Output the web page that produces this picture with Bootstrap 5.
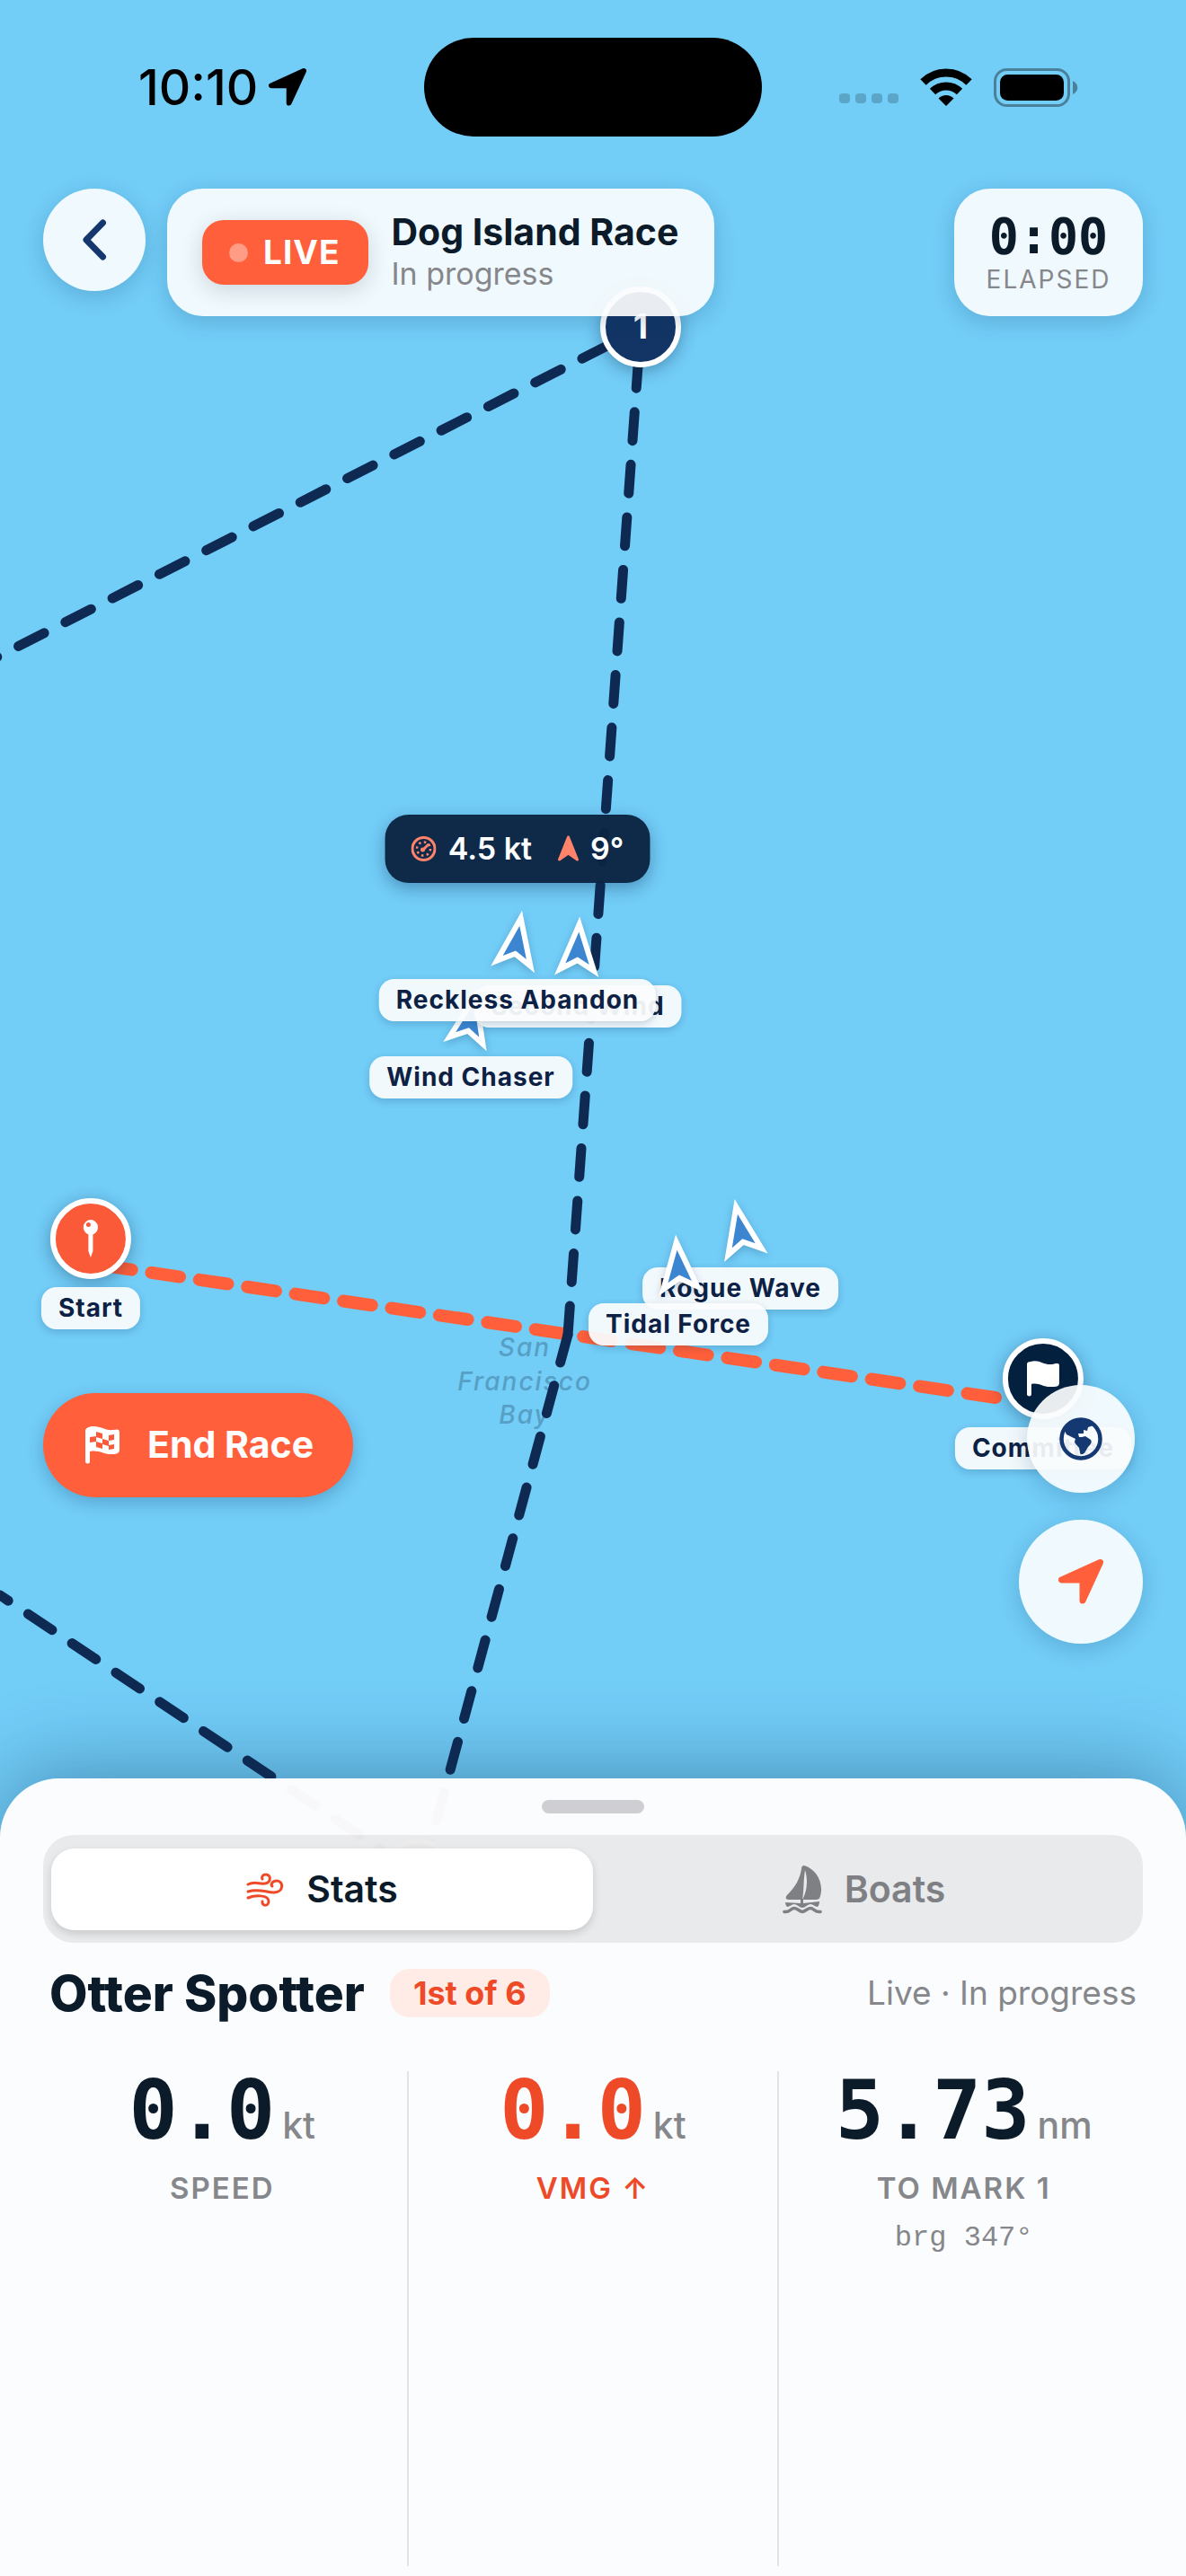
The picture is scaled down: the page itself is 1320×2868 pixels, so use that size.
<!DOCTYPE html>
<html lang="en">
<head>
<meta charset="utf-8">
<meta name="viewport" content="width=device-width, initial-scale=1">
<title>Dog Island Race</title>
<link href="https://cdn.jsdelivr.net/npm/bootstrap@5.3.0/dist/css/bootstrap.min.css" rel="stylesheet">
<style>
:root{--sea:#72cdf7;--ink:#0b1b2a;--navy:#0f2a52;--coral:#ff5f3a;--ember:#ee4a28;--mute:#86878b}
body{font-family:Inter,"Liberation Sans",sans-serif;background:var(--sea);color:var(--ink);line-height:1.2}
button{font-family:inherit}
.screen{min-height:100vh;position:relative;overflow:hidden;isolation:isolate}
.glass{background:rgba(250,252,253,.93);box-shadow:0 6px 24px rgba(10,50,90,.2)}

/* status bar */
.statusbar{height:210px;padding:42px 120px 0 154px}
.side{width:318px;height:110px}
.side-end{height:110px}
.clock{font-size:55px;font-weight:500;color:#000}
.island{width:376px;height:110px;background:#000;border-radius:55px}
.celldot{width:12px;height:11px;border-radius:4px;background:#5ba5c8}

/* header */
.edge{padding-left:48px;padding-right:48px}
.back{width:114px;height:114px;border:0}
.racecard{height:142px;border-radius:40px;padding:0 40px 0 39px;gap:25px}
.livetag{height:72px;padding:0 32px 0 30px;gap:17px;border-radius:24px;background:var(--coral);color:#fff;font-size:37px;font-weight:700;letter-spacing:1px;box-shadow:0 6px 24px rgba(10,30,50,.16)}
.livedot{width:21px;height:21px;background:#ff9c85}
.racename{font-size:41px;font-weight:700;line-height:48px}
.racestate{font-size:34px;line-height:46px;color:var(--mute)}
.timer{width:210px;height:142px;border-radius:40px}
.mono{font-family:"DejaVu Sans Mono",monospace}
.timer .mono{font-size:55px;font-weight:700;line-height:60px}
.timer small{font-size:28px;line-height:36px;letter-spacing:2px;color:var(--mute)}

/* map */
.chart{position:absolute;inset:0;z-index:-1}
.chart>svg{position:absolute;top:0;left:calc(50% - 660px)}
.pin{position:absolute;display:flex;flex-direction:column;align-items:center;white-space:nowrap}
.boat{transform:translate(-50%,-43px)}
.buoy{transform:translate(-50%,-45px);gap:9px}
.boat svg{filter:drop-shadow(0 3px 4px rgba(10,50,90,.25))}
.pinlabel{height:47px;padding:0 19px;border-radius:17px;background:rgba(250,252,253,.94);color:#0c2144;font-size:28px;font-weight:700;line-height:47px;letter-spacing:1px;box-shadow:0 3px 8px rgba(10,50,90,.2)}
.disc{width:90px;height:90px;border:6px solid #fff;border-radius:50%;box-shadow:0 4px 18px rgba(10,30,60,.35);color:#fff;font-size:38px;font-weight:700}
.disc-mark{background:#123566}
.disc-start{background:#fb5a38}
.disc-comm{background:#04203f}
.readout{transform:translateX(-50%);height:76px;width:295px;border-radius:26px;background:rgba(11,36,67,.97);color:#fff;font-size:34px;font-weight:600;box-shadow:0 6px 18px rgba(10,40,80,.35);flex-direction:row;justify-content:center;gap:28px}
.reading{display:flex;align-items:center;gap:13px}
.p-mark{left:calc(50% + 53px);top:364px}
.p-start{left:calc(50% - 559px);top:1379px}
.p-comm{left:calc(50% + 501px);top:1535px}
.p-wind{left:calc(50% - 136px);top:1133px}
.p-second{left:calc(50% - 17px);top:1054px}
.p-reck{left:calc(50% - 84px);top:1047px}
.p-rogue{left:calc(50% + 164px);top:1368px}
.p-tidal{left:calc(50% + 95px);top:1408px}
.p-read{left:calc(50% - 84px);top:907px}

/* floating controls */
.controls{margin-bottom:150px}
.endrace{height:116px;margin-top:9px;padding:0 44px 0 46px;gap:30px;border:0;border-radius:58px;background:var(--coral);color:#fff;font-size:41px;font-weight:700;box-shadow:0 6px 18px rgba(10,50,90,.25)}
.fabs{gap:30px}
.fab-s{width:120px;height:120px;border:0}
.fab-l{width:138px;height:138px;border:0}

/* bottom sheet */
.sheet{background:rgba(253,253,254,.98);border-radius:66px 66px 0 0;padding:24px 0 11px;box-shadow:0 -10px 90px rgba(10,50,90,.38)}
.grabber{width:114px;height:15px;border-radius:8px;background:#cfcfd3}
.seg{height:120px;margin-top:24px;padding:15px 9px 14px;border-radius:34px;background:rgba(0,0,0,.07)}
.seg button{border:0;background:none;border-radius:26px;font-size:41px;font-weight:600;color:#7f8084;gap:25px}
.seg button.on{background:#fff;color:var(--ink);box-shadow:0 4px 10px rgba(0,0,0,.14)}
.boatrow{height:56px;margin-top:28px;padding:0 55px}
.boatname{font-size:55px;font-weight:800;line-height:56px;margin:0}
.rank{height:54px;padding:0 26px;border-radius:22px;background:#ffece7;color:var(--ember);font-size:36px;font-weight:700;line-height:54px;margin-left:28px}
.livestate{font-size:37px;color:var(--mute)}
.stats{padding:0 42px;margin-top:59px;min-height:551px}
.stat+.stat{border-left:2px solid #e3e3e6}
.bigfig{font-size:90px;font-weight:700;line-height:88px}
.unit{font-size:41px;font-weight:500;color:var(--mute);margin-left:8px}
.statname{font-size:33px;font-weight:600;letter-spacing:2px;line-height:40px;margin-top:22px;color:var(--mute)}
.hot,.hot .statname{color:var(--ember)}
.bearing{font-family:"Liberation Mono",monospace;font-size:32px;line-height:40px;margin-top:16px;color:var(--mute)}
</style>
</head>
<body>
<main class="screen d-flex flex-column">

  <div class="chart">
    <svg width="1320" height="2868" viewBox="0 0 1320 2868" fill="none" stroke-linecap="round" aria-hidden="true">
      <g fill="#579fc5" font-family="Inter,'Liberation Sans',sans-serif" font-size="28" font-style="italic" font-weight="500" letter-spacing="2" text-anchor="middle">
        <text x="584" y="1510">San</text><text x="584" y="1548">Francisco</text><text x="584" y="1585">Bay</text>
      </g>
      <path d="M115 1409L1108 1556" stroke="#ff5f3a" stroke-width="14" stroke-dasharray="32 22"/>
      <g stroke="#0f2a52" stroke-width="11" stroke-dasharray="32 26.7">
        <path d="M632 1486L713 366"/>
        <path d="M632 1486L468 2093"/>
        <path d="M713 366L-10 735" stroke-dashoffset="17.7"/>
        <path d="M0 1776L465 2087" stroke-dashoffset="21"/>
      </g>
      <circle cx="465" cy="2092" r="42" fill="#123a6e" stroke="#fff" stroke-width="6"/>
    </svg>

    <div class="pin buoy p-mark"><span class="disc disc-mark d-flex align-items-center justify-content-center">1</span></div>
    <div class="pin buoy p-start">
      <span class="disc disc-start d-flex align-items-center justify-content-center">
        <svg width="20" height="44" viewBox="0 0 20 44"><path d="M10 1a8.500 8.500 0 0 1 2.500 16.500V36L10 43 7.500 36V17.500A8.500 8.500 0 0 1 10 1z" fill="#fff"/><circle cx="7.500" cy="6.500" r="2.500" fill="#fb5a38"/></svg>
      </span>
      <span class="pinlabel">Start</span>
    </div>
    <div class="pin buoy p-comm">
      <span class="disc disc-comm d-flex align-items-center justify-content-center">
        <svg width="36" height="40" viewBox="0 0 36 40"><path d="M0 4C0 2 2 1 4 1c10-3 14 4 24 3 4-1 8-2 8 1v20c0 4-4 4-8 4-10 1-14-5-23-3v11a2.500 2.500 0 0 1-5 0z" fill="#fff"/></svg>
      </span>
      <span class="pinlabel">Committee</span>
    </div>

    <div class="pin boat p-wind"><svg width="86" height="86" viewBox="-43 -43 86 86"><path transform="rotate(12)" d="M0-25L19 26 0 15-19 26z" fill="#3c86d1" stroke="#fff" stroke-width="6"/></svg><span class="pinlabel">Wind Chaser</span></div>
    <div class="pin boat p-second"><svg width="86" height="86" viewBox="-43 -43 86 86"><path transform="rotate(3)" d="M0-25L19 26 0 15-19 26z" fill="#3c86d1" stroke="#fff" stroke-width="6"/></svg><span class="pinlabel">Second Wind</span></div>
    <div class="pin boat p-reck"><svg width="86" height="86" viewBox="-43 -43 86 86"><path transform="rotate(9)" d="M0-25L19 26 0 15-19 26z" fill="#3c86d1" stroke="#fff" stroke-width="6"/></svg><span class="pinlabel">Reckless Abandon</span></div>
    <div class="pin boat p-rogue"><svg width="86" height="86" viewBox="-43 -43 86 86"><path transform="rotate(-11)" d="M0-25L19 26 0 15-19 26z" fill="#3c86d1" stroke="#fff" stroke-width="6"/></svg><span class="pinlabel">Rogue Wave</span></div>
    <div class="pin boat p-tidal"><svg width="86" height="86" viewBox="-43 -43 86 86"><path transform="rotate(-5)" d="M0-25L19 26 0 15-19 26z" fill="#3c86d1" stroke="#fff" stroke-width="6"/></svg><span class="pinlabel">Tidal Force</span></div>

    <div class="pin readout p-read">
      <span class="reading"><svg width="28" height="28" viewBox="0 0 28 28" fill="none" stroke="#ff836b"><circle cx="14" cy="14" r="12.500" stroke-width="3"/><circle cx="14" cy="14" r="7.500" stroke-width="2.500" stroke-dasharray="2.500 3.400"/><path d="M13 15.500l6-6" stroke-width="3" stroke-linecap="round"/><circle cx="13" cy="15" r="1.500" stroke-width="2"/></svg>4.5 kt</span>
      <span class="reading"><svg width="24" height="30" viewBox="0 0 24 30"><path d="M12 2L22 27 12 20 2 27z" fill="#ff836b" stroke="#ff836b" stroke-width="3" stroke-linejoin="round"/></svg>9°</span>
    </div>
  </div>

  <div class="statusbar d-flex">
    <div class="side d-flex align-items-center gap-2">
      <span class="clock">10:10</span>
      <svg class="ms-1" width="42" height="42" viewBox="0 0 50 50"><path d="M46.500 3.500L3.500 23H27V46z" stroke="#000" stroke-width="7" stroke-linejoin="round"/></svg>
    </div>
    <div class="island"></div>
    <div class="side-end flex-fill d-flex align-items-center justify-content-end">
      <div class="d-flex mt-4" style="gap:6px"><i class="celldot"></i><i class="celldot"></i><i class="celldot"></i><i class="celldot"></i></div>
      <svg class="ms-4" width="58" height="42" viewBox="0 0 58 42" fill="none" stroke="#000" stroke-width="9"><path d="M3.500 15.500a36 36 0 0 1 51 0"/><path d="M14 26a21.500 21.500 0 0 1 30 0"/><path d="M29 42l-8.500-8.500a12 12 0 0 1 17 0z" fill="#000" stroke="none"/></svg>
      <svg class="ms-4" width="94" height="43" viewBox="0 0 94 43"><rect x="1.500" y="1.500" width="82" height="40" rx="13" fill="none" stroke="#4a8099" stroke-width="3"/><rect x="7" y="7" width="71" height="29" rx="8.500"/><path d="M88 14c7 3 7 12 0 15z" fill="#4a8099"/></svg>
    </div>
  </div>

  <header class="edge d-flex align-items-start">
    <button class="back glass rounded-circle d-flex align-items-center justify-content-center p-0" aria-label="Back">
      <svg width="28" height="46" viewBox="0 0 28 46" fill="none" stroke="#14386d" stroke-width="7" stroke-linecap="round" stroke-linejoin="round"><path d="M23.500 4L5 23l18.500 19"/></svg>
    </button>
    <div class="racecard glass d-flex align-items-center ms-4">
      <span class="livetag d-flex align-items-center"><i class="livedot rounded-circle"></i>LIVE</span>
      <div>
        <div class="racename">Dog Island Race</div>
        <div class="racestate">In progress</div>
      </div>
    </div>
    <div class="timer glass ms-auto d-flex flex-column align-items-center justify-content-center">
      <span class="mono">0:00</span>
      <small>ELAPSED</small>
    </div>
  </header>

  <div class="controls edge mt-auto d-flex justify-content-between align-items-start">
    <button class="endrace d-flex align-items-center">
      <svg width="40" height="42" viewBox="0 0 40 42"><path d="M1 4C2 2 5 0 10 0c9 0 13 5 22 4 5-1 7-1 7 3v19c0 4-3 5-8 5-9 1-14-5-25-3v11a2.500 2.500 0 0 1-5 0z" fill="#fff"/><path d="M13 6l7 2v6l-7-2zM27 10l6-1v6l-6 1zM6 12l7-1v6l-7 1zM20 14l7 2v6l-7-2zM13 17l7 2v6l-7-2zM27 21l6-1v5l-6 1z" fill="#fb5a38"/></svg>
      End Race
    </button>
    <div class="fabs d-flex flex-column align-items-center">
      <button class="fab-s glass rounded-circle d-flex align-items-center justify-content-center p-0" aria-label="Map style">
        <svg width="48" height="48" viewBox="0 0 48 48"><circle cx="24" cy="24" r="21.500" fill="none" stroke="#143872" stroke-width="4.500"/><path d="M5 13C10 3 27-1 38 9l-3 1-3 1-1 4-4-1v4l-6 0 1 4 3 0 4-1 6 4c2 3-1 6-3 8l-3 5c-1 3-6 5-6 1l-1-5c-2-3-5-5-5-7l1-3-2-1-8-4z" fill="#143872"/></svg>
      </button>
      <button class="fab-l glass rounded-circle d-flex align-items-center justify-content-center p-0" aria-label="Locate">
        <svg width="50" height="50" viewBox="0 0 50 50"><path d="M46.500 3.500L3.500 23H27V46z" fill="#ff5f3a" stroke="#ff5f3a" stroke-width="7" stroke-linejoin="round"/></svg>
      </button>
    </div>
  </div>

  <section class="sheet">
    <div class="grabber mx-auto"></div>
    <div class="edge">
      <div class="seg d-flex" role="tablist">
        <button class="on flex-fill w-50 d-flex align-items-center justify-content-center" role="tab" aria-selected="true">
          <svg width="42" height="38" viewBox="0 0 42 38" fill="none" stroke="#ee4a28" stroke-width="3" stroke-linecap="round" stroke-linejoin="round"><path d="M2 13c8-4 12 0 19-1 7-1 7-10 1-10-4 0-5 3-4 5"/><path d="M2 21c12-4 20 1 29 1 11 0 11-13 3-13-5 0-7 4-5 6"/><path d="M2 28c7-3 23-4 23 4 0 6-8 5-7 0"/></svg>
          Stats
        </button>
        <button class="flex-fill w-50 d-flex align-items-center justify-content-center" role="tab" aria-selected="false">
          <svg width="44" height="54" viewBox="0 0 44 54" fill="#7f8084"><path d="M24 0c14 4 22 20 18 34-1 3-2 4-5 4H22c6-10 6-24 3-33-2 12-1 22-3 33H7c-4 0-4-3-2-5C15 23 19 15 21 4c0-3 1-4 3-4z"/><path d="M3 41l17 1v-5h3v5l18-2c0 3-1 5-2 6-3 0-5-3-8-3s-6 4-9 4-6-4-9-4-5 3-8 3c-1-1-2-3-2-5z"/><path d="M2 51.500c6 1 7-4 11-4s6 4 9 4 5-4 9-4 5 5 11 4" fill="none" stroke="#7f8084" stroke-width="3.500" stroke-linecap="round"/></svg>
          Boats
        </button>
      </div>
    </div>
    <div class="boatrow d-flex align-items-center">
      <h1 class="boatname">Otter Spotter</h1>
      <span class="rank">1st of 6</span>
      <span class="livestate ms-auto">Live · In progress</span>
    </div>
    <div class="stats d-flex text-center">
      <div class="stat col">
        <div><span class="bigfig mono">0.0</span><span class="unit">kt</span></div>
        <div class="statname">SPEED</div>
      </div>
      <div class="stat col hot">
        <div><span class="bigfig mono">0.0</span><span class="unit">kt</span></div>
        <div class="statname">VMG ↑</div>
      </div>
      <div class="stat col">
        <div><span class="bigfig mono">5.73</span><span class="unit">nm</span></div>
        <div class="statname">TO MARK 1</div>
        <div class="bearing">brg 347°</div>
      </div>
    </div>
  </section>
</main>
<script src="https://cdn.jsdelivr.net/npm/bootstrap@5.3.0/dist/js/bootstrap.bundle.min.js"></script>
</body>
</html>
